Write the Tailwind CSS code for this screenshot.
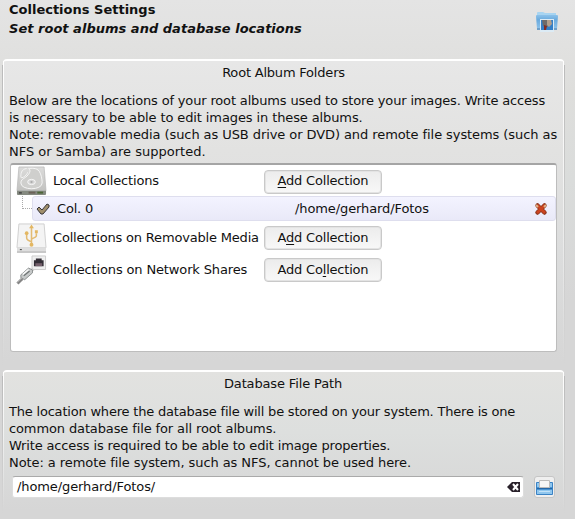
<!DOCTYPE html>
<html lang="en"><head><meta charset="utf-8"><title>Collections Settings</title>
<script src="https://cdn.jsdelivr.net/npm/@tailwindcss/browser@4"></script></head>
<body class="w-[575px] h-[519px] overflow-hidden text-[#111] text-[13px] leading-[17px] whitespace-nowrap bg-[linear-gradient(#e4e4e4,#dededc_90px,#dadcdb_180px,#d6d6d6_300px,#d6d6d6)] font-['DejaVu_Sans',sans-serif]">
<header class="h-[59px] pl-[9px] pr-[16px] flex justify-between font-bold">
  <div class="leading-[19px]"><h1>Collections Settings</h1><p class="italic tracking-[0.02px]">Set root albums and database locations</p></div>
  <svg class="mt-[11px]" width="24" height="22" viewBox="0 0 24 22"><defs><linearGradient id="f" x2="0" y2="1"><stop stop-color="#8cc2ea"/><stop offset=".35" stop-color="#6aaadd"/><stop offset="1" stop-color="#8fc4ec"/></linearGradient></defs><path d="M2 4V2q0-1 1-1h5l2 1h11v6H2z" fill="#a7d4f1"/><path d="M1 5q0-1 1-1h20q1 0 1 1l-1 13H2z" fill="url(#f)"/><path d="M2 17h20v2H2z" fill="#6f9fc8"/><path d="M5 8h14v13H5z" fill="#dcebf5"/><path d="M6 9h12v10H6z" fill="#347fc6"/><path d="M7 9h8l1 4-4 3-4-1z" fill="#6d6b6b"/><path d="M12 9h4l1 4-3 3-2-2z" fill="#b39f8b"/><path d="M9 14l3 1-1 4H9z" fill="#842d23"/></svg>
</header>
<main class="pl-[3px] pr-[11px]">
<section class="h-[303px] rounded-t-[4px] border-t-2 border-t-white px-[6px] relative bg-[linear-gradient(#e7e7e7,#e2e2e1_90px,#dcdddd_190px,#d6d6d6)]">
  <i class="absolute left-0 top-0 w-px h-full bg-gradient-to-b from-white to-transparent"></i><i class="absolute -left-px top-1 w-px h-full bg-gradient-to-b from-[#bbb] to-transparent"></i><i class="absolute right-0 top-0 w-px h-full bg-gradient-to-b from-white to-transparent"></i><i class="absolute -right-px top-1 w-px h-full bg-gradient-to-b from-[#bbb] to-transparent"></i>
  <h2 class="text-center pt-[3px] h-[31px] tracking-[-0.2px]">Root Album Folders</h2>
  <div class="h-[71px]"><p class="tracking-[-0.155px]">Below are the locations of your root albums used to store your images. Write access</p><p class="tracking-[-0.11px]">is necessary to be able to edit images in these albums.</p><p class="tracking-[-0.08px]">Note: removable media (such as USB drive or DVD) and remote file systems (such as</p><p>NFS or Samba) are supported.</p></div>
  <div class="ml-px h-[189px] w-[547px] rounded-[3px] border border-t-2 border-[#bdbdbd] border-t-[#a5a5a5] bg-white pl-[5px]">
    <div class="flex h-[31px] items-center"><svg width="31" height="32" viewBox="0 0 32 32"><defs><linearGradient id="m" x2="0" y2="1"><stop stop-color="#dcdcdb"/><stop offset="1" stop-color="#c2c2c0"/></linearGradient></defs><path d="M3 1.500h26l2 24.500H1z" fill="url(#m)" stroke="#b5b5b5" stroke-width=".7"/><path d="M1 26h30v3.500q0 1-1 1H2q-1 0-1-1z" fill="#858a80"/><path d="M13 3c3 2 1 6-3 9-3 2-5 3-5 6 0 8 22 8 22 0 0-4-1-9-3-12-3-4-8-3-11-3z" fill="#cfcfcd" stroke="#f6f6f6"/><path d="M11 3C5 4 5 9 5 12c0 2 6-1 7-5" fill="none" stroke="#f4f4f4"/><ellipse cx="16" cy="17" rx="4" ry="2.700" fill="#d5d5d5" stroke="#f7f7f7"/><ellipse cx="16" cy="17" rx="1.200" ry=".8" fill="#999"/><path d="M3 27.500h3v1.500H3z" fill="#444"/><path d="M13 27h7v2h-7z" fill="#6b6258"/><path d="M22 27h6v2h-6z" fill="#4c6638"/></svg><span class="w-[211px] ml-[6px] tracking-[-0.18px]">Local Collections</span><button class="w-[118px] h-[24px] mt-[2px] rounded-[4px] border border-[#c9c9c9] bg-gradient-to-b from-[#ececec] to-[#f8f8f8] shadow-[inset_0_0_0_1px_#e3e3e3] tracking-[-0.2px] pb-[2px]"><u class="underline-offset-2">A</u>dd Collection</button></div>
    <div class="flex h-[25px]"><i class="ml-[6px] w-[10px] h-[13px] border-l border-b border-dotted border-[#aaa]"></i><div class="flex items-center flex-1 rounded-[3px] border border-[#dedeee] bg-gradient-to-b from-[#f3f3ff] to-[#e9e9f8]"><svg class="ml-[3px]" width="14" height="12" viewBox="0 0 14 12"><path d="M1 6l2-2 3 3 5-6 2 1v2l-6 7H5z" fill="#a08f6c" stroke="#38363a"/></svg><span class="ml-[7px] w-[238px] tracking-[-0.2px]">Col. 0</span><span class="w-[239px] tracking-[-0.1px]">/home/gerhard/Fotos</span><svg width="14" height="14" viewBox="0 0 14 14"><path d="M3.500 3.500l7 7M10.500 3.500l-7 7" stroke="#8f3a20" stroke-width="4.500" stroke-linecap="round"/><path d="M3 3l8 8M11 3l-8 8" stroke="#cc431f" stroke-width="2.800"/><path d="M2 3l2 2M12 3l-2 2" stroke="#dfb088" stroke-width="2"/></svg></div></div>
    <div class="flex h-[33px] items-center"><svg width="31" height="32" viewBox="0 0 32 32"><path d="M3 1.500h26l2 24.500H1z" fill="#f4f4f4" stroke="#d0d0d0"/><path d="M1 26h30v4H1z" fill="#dedede"/><path d="M1 30.500h30" stroke="#999"/><g fill="none" stroke="#e3bb72" stroke-width="1.600"><path d="M16 5v18M16 20q-5-2-5-4v-4M16 17q5-2 5-3v-3"/></g><path d="M13.500 6L16 2l2.500 4zM19.500 8h3v3h-3z" fill="#e3b762"/><circle cx="11" cy="11" r="1.900" fill="#e3b762"/><circle cx="16" cy="23" r="2" fill="#e3b762"/><path d="M4 28h2" stroke="#333"/></svg><span class="w-[211px] ml-[6px] tracking-[-0.18px]">Collections on Removable Media</span><button class="w-[118px] h-[24px] rounded-[4px] border border-[#c9c9c9] bg-gradient-to-b from-[#ececec] to-[#f8f8f8] shadow-[inset_0_0_0_1px_#e3e3e3] tracking-[-0.2px]">A<u class="underline-offset-2">d</u>d Collection</button></div>
    <div class="flex h-[32px] items-center"><svg width="31" height="32" viewBox="0 0 32 32"><path d="M16.500 1.500h14v14h-14z" fill="#efefef" stroke="#ccc"/><path d="M18.500 12V6h2V4h6v2h2v6z" fill="#332e36"/><path d="M20 9h7v3h-7z" fill="#75606c"/><path d="M15 17l3-2" stroke="#ccc" stroke-width="3"/><path d="M5 21l8-7 4 2v3l-8 7-4-2z" fill="#c6c9c9" stroke="#8b8f8f"/><path d="M8 22l6-5" stroke="#707575" stroke-width="1.500"/><path d="M7 20.500l6-5" stroke="#fafafa" stroke-width="1.500"/><path d="M1.500 30l5-5" stroke="#858585" stroke-width="3"/><path d="M1 29l5-5" stroke="#c5c5c5"/></svg><span class="w-[211px] ml-[6px] mb-[2px] tracking-[-0.14px]">Collections on Network Shares</span><button class="w-[118px] h-[24px] rounded-[4px] border border-[#c9c9c9] bg-gradient-to-b from-[#ececec] to-[#f8f8f8] shadow-[inset_0_0_0_1px_#e3e3e3] tracking-[-0.2px] pb-px">Add Co<u class="underline-offset-2">l</u>lection</button></div>
  </div>
</section>
<section class="mt-[8px] h-[140px] rounded-t-[4px] border-t-2 border-t-white px-[6px] relative bg-[linear-gradient(#e2e2e0,#dddfde_60px,#d6d6d6)]">
  <i class="absolute left-0 top-0 w-px h-full bg-gradient-to-b from-white to-transparent"></i><i class="absolute -left-px top-1 w-px h-full bg-gradient-to-b from-[#bbb] to-transparent"></i><i class="absolute right-0 top-0 w-px h-full bg-gradient-to-b from-white to-transparent"></i><i class="absolute -right-px top-1 w-px h-full bg-gradient-to-b from-[#bbb] to-transparent"></i>
  <h2 class="text-center pt-[3px] h-[31px] pr-px tracking-[-0.14px]">Database File Path</h2>
  <div class="h-[73px]"><p class="tracking-[-0.2px]">The location where the database file will be stored on your system. There is one</p><p class="tracking-[-0.12px]">common database file for all root albums.</p><p class="tracking-[-0.15px]">Write access is required to be able to edit image properties.</p><p class="tracking-[-0.07px]">Note: a remote file system, such as NFS, cannot be used here.</p></div>
  <div class="ml-[3px] flex"><div class="w-[512px] h-[22px] bg-white rounded-[3px] border border-[#ddd] border-t-[#aaa] flex items-center justify-between pl-[4px] pr-[2px]"><span class="tracking-[-0.1px] pb-px">/home/gerhard/Fotos/</span><svg width="14" height="12" viewBox="0 0 14 12"><path d="M0 6l5-5h8v10H5z" fill="#29212a"/><path d="M6 3l5 6m0-6L6 9" stroke="#fff" stroke-width="2"/></svg></div><button class="ml-[10px] w-[21px] h-[22px] grid place-items-center rounded-[3px] border border-[#c5c5c5] bg-[#efefef]"><svg width="17" height="16" viewBox="0 0 17 16"><path d="M.5 3.500h16v12H.5z" fill="#8fc6ee" stroke="#3a82c4"/><path d="M1 8h15v3H1z" fill="#4a93d1"/><path d="M3.500 1.500h10v7h-10z" fill="#f6f6f6" stroke="#bbb"/><path d="M1 9.500h15" stroke="#2467a8"/><path d="M3 12.500h11" stroke="#c2e2f8"/></svg></button></div>
</section>
</main></body></html>
